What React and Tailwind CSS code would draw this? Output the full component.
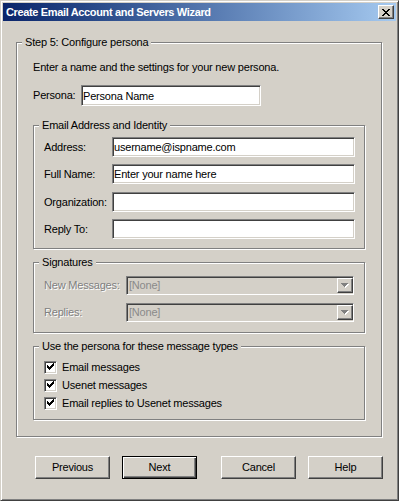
const sunken =
  "border border-t-[#808080] border-l-[#808080] border-b-white border-r-white shadow-[inset_1px_1px_0_#404040,inset_-1px_-1px_0_#d4d0c8]";
const raised =
  "border border-t-white border-l-white border-b-[#404040] border-r-[#404040] shadow-[inset_-1px_-1px_0_#808080]";
const etched = "relative border border-[#808080] shadow-[1px_1px_0_#fff,inset_1px_1px_0_#fff]";
const legend = "absolute top-[-7px] left-[5px] px-[3px] bg-[#d4d0c8] leading-[13px]";
const disabledText = "text-[#808080] [text-shadow:1px_1px_0_#fff]";

function CloseGlyph() {
  const rows = [0, 1, 2, 3, 4, 5, 6];
  return (
    <svg width="8" height="7" viewBox="0 0 8 7" shapeRendering="crispEdges">
      {rows.map((i) => (
        <g key={i} fill="#000">
          <rect x={i} y={i} width="2" height="1" />
          <rect x={6 - i} y={i} width="2" height="1" />
        </g>
      ))}
    </svg>
  );
}

function CheckGlyph() {
  const cols = [5, 6, 7, 6, 5, 4, 3];
  return (
    <svg width="11" height="11" viewBox="0 0 11 11" shapeRendering="crispEdges">
      {cols.map((y, i) => (
        <rect key={i} x={2 + i} y={y - 2} width="1" height="3" fill="#000" />
      ))}
    </svg>
  );
}

function Arrow() {
  return (
    <svg width="8" height="5" viewBox="0 0 8 5" shapeRendering="crispEdges">
      <path d="M1 1h7v1H1zM2 2h5v1H2zM3 3h3v1H3zM4 4h1v1H4z" fill="#fff" />
      <path d="M0 0h7v1H0zM1 1h5v1H1zM2 2h3v1H2zM3 3h1v1H3z" fill="#808080" />
    </svg>
  );
}

function Field({ label, value = "", extra = "" }) {
  return (
    <div className={"flex items-center h-[20px] " + extra}>
      <span className="w-[68px] leading-[13px]">{label}</span>
      <input
        readOnly
        defaultValue={value}
        className={"w-[243px] h-[20px] bg-white px-[1px] text-[11px] tracking-[-0.2px] text-black outline-none " + sunken}
      />
    </div>
  );
}

function Combo({ label }) {
  return (
    <div className="flex items-center h-[19px]">
      <span className={"w-[82px] leading-[13px] " + disabledText}>{label}</span>
      <div className={"w-[228px] h-[19px] flex items-center justify-between pl-[2px] " + sunken}>
        <span className="text-[#8a8a8a] leading-[13px]">[None]</span>
        <div className={"w-[16px] h-[15px] flex items-center justify-center bg-[#d4d0c8] " + raised}>
          <Arrow />
        </div>
      </div>
    </div>
  );
}

function Check({ label }) {
  return (
    <div className="flex items-center h-[13px]">
      <div className={"w-[13px] h-[13px] bg-white flex items-center justify-center " + sunken}>
        <CheckGlyph />
      </div>
      <span className="ml-[5px] leading-[13px]">{label}</span>
    </div>
  );
}

function Button({ children, primary }) {
  const cls = primary
    ? "border border-black shadow-[inset_1px_1px_0_#fff,inset_-1px_-1px_0_#404040,inset_-2px_-2px_0_#808080]"
    : raised;
  return (
    <button className={"w-[75px] h-[23px] bg-[#d4d0c8] text-[11px] tracking-[-0.2px] text-black leading-[13px] " + cls}>
      {children}
    </button>
  );
}

export default function App() {
  return (
    <div className="w-[399px] h-[501px] bg-[#d4d0c8] font-['Liberation_Sans',Arial,sans-serif] text-[11px] tracking-[-0.2px] text-black border border-t-[#d4d0c8] border-l-[#d4d0c8] border-b-[#404040] border-r-[#404040] shadow-[inset_1px_1px_0_#fff,inset_-1px_-1px_0_#808080] p-[2px] flex flex-col">
      <div className="h-[18px] flex items-center justify-between bg-linear-to-r from-[#0a246a] to-[#a6caf0] pl-[3px] pr-[2px]">
        <span className="text-white font-bold text-[11px] tracking-[-0.35px] leading-[13px]">Create Email Account and Servers Wizard</span>
        <div className={"w-[16px] h-[14px] flex items-center justify-center bg-[#d4d0c8] " + raised}>
          <CloseGlyph />
        </div>
      </div>

      <div className={"ml-[13px] mt-[21px] w-[366px] h-[395px] px-[16px] pt-[18px] flex flex-col " + etched}>
        <span className={legend}>Step 5: Configure persona</span>
        <p className="leading-[13px]">Enter a name and the settings for your new persona.</p>

        <div className="flex items-center h-[21px] mt-[11px]">
          <span className="w-[48px] leading-[13px]">Persona:</span>
          <input
            readOnly
            defaultValue="Persona Name"
            className={"w-[180px] h-[21px] bg-white px-[1px] text-[11px] tracking-[-0.2px] text-black outline-none " + sunken}
          />
        </div>

        <div className={"mt-[19px] h-[124px] pl-[10px] pt-[11px] flex flex-col " + etched}>
          <span className={legend}>Email Address and Identity</span>
          <Field label="Address:" value="username@ispname.com" />
          <Field label="Full Name:" value="Enter your name here" extra="mt-[7px]" />
          <Field label="Organization:" extra="mt-[8px]" />
          <Field label="Reply To:" extra="mt-[7px]" />
        </div>

        <div className={"mt-[13px] h-[71px] pl-[10px] pt-[13px] flex flex-col gap-[8px] " + etched}>
          <span className={legend}>Signatures</span>
          <Combo label="New Messages:" />
          <Combo label="Replies:" />
        </div>

        <div className={"mt-[13px] h-[74px] pl-[10px] pt-[14px] flex flex-col gap-[5px] " + etched}>
          <span className={legend}>Use the persona for these message types</span>
          <Check label="Email messages" />
          <Check label="Usenet messages" />
          <Check label="Email replies to Usenet messages" />
        </div>
      </div>

      <div className="flex mt-[19px] ml-[32px]">
        <Button>Previous</Button>
        <div className="ml-[12px]">
          <Button primary>Next</Button>
        </div>
        <div className="ml-[24px]">
          <Button>Cancel</Button>
        </div>
        <div className="ml-[12px]">
          <Button>Help</Button>
        </div>
      </div>
    </div>
  );
}
